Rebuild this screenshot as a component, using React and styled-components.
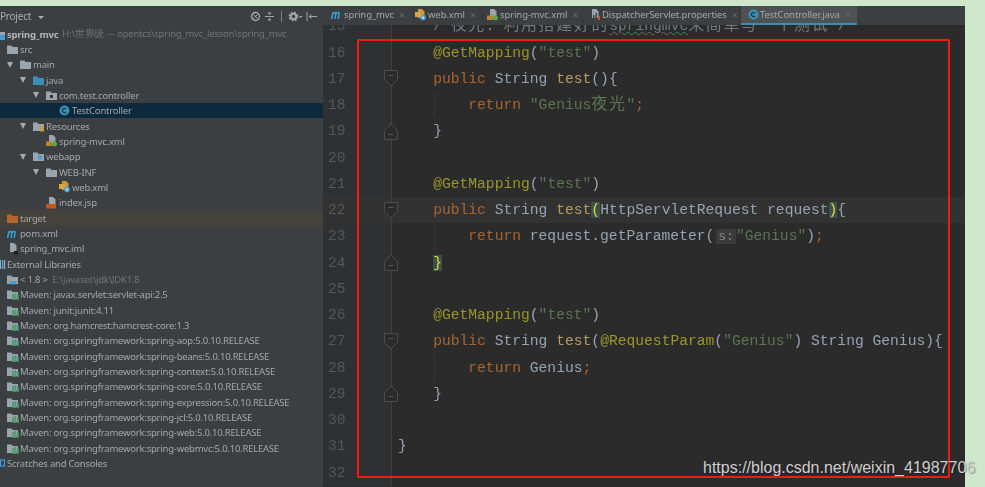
import styled, { createGlobalStyle } from "styled-components";

const GlobalStyle = createGlobalStyle`
    html, body {
        margin: 0;
        height: 100%;
        overflow: hidden;
        background: #cfe8cb;
    }
`

const Page = styled.div`
    position: relative;
    width: 985px;
    height: 487px;
    padding-top: 6px;
    box-sizing: border-box;
    overflow: hidden;
`

const Window = styled.div`
    display: flex;
    width: 965px;
    height: 481px;
    overflow: hidden;
    background: #3c3f41;
    filter: blur(0.45px);
`

const Sidebar = styled.div`
    width: 323px;
    flex: none;
    overflow: hidden;
    font-family: "Noto Sans", sans-serif;
    font-size: 9.5px;
    letter-spacing: -0.22px;
    color: #a4a8aa;
`

const PanelHeader = styled.div`
    display: flex;
    align-items: center;
    height: 20px;
    padding-right: 5px;
    margin-bottom: 0.5px;
    font-size: 10px;
`

const PanelTitle = styled.span`
    flex: 1;
    color: #a9adaf;
`

const Caret = styled.span`
    display: inline-block;
    margin-left: 7px;
    vertical-align: 1px;
    border-left: 3px solid transparent;
    border-right: 3px solid transparent;
    border-top: 3px solid #a9adaf;
`

const HeaderTools = styled.div`
    display: flex;
    align-items: center;
    gap: 3px;
`

const ToolSep = styled.div`
    width: 1px;
    height: 11px;
    background: #7d8082;
    margin: 0 3px;
`

const Tree = styled.div`
    margin-left: -19px;
`

const TreeRow = styled.div`
    display: flex;
    align-items: center;
    height: 15.33px;
    padding-left: ${p => p.$depth * 13}px;
    white-space: nowrap;
    background: ${p => p.$bg || "transparent"};
`

const ArrowSlot = styled.span`
    display: flex;
    align-items: center;
    width: 13px;
    flex: none;
`

const ArrowDown = styled.span`
    border-left: 3px solid transparent;
    border-right: 3px solid transparent;
    border-top: 6px solid #a7abad;
`

const ArrowRight = styled.span`
    border-top: 3px solid transparent;
    border-bottom: 3px solid transparent;
    border-left: 5px solid #83878a;
`

const IconSlot = styled.span`
    display: flex;
    align-items: center;
    width: 13px;
    flex: none;
`

const RootName = styled.b`
    color: #b4b7b9;
    margin-right: 4px;
`

const DimText = styled.span`
    color: #707476;
`

const Editor = styled.div`
    flex: 1;
    min-width: 0;
    display: flex;
    flex-direction: column;
    background: #2b2b2b;
`

const TabBar = styled.div`
    display: flex;
    height: 19px;
    flex: none;
    padding-left: 6px;
    background: #3c3f41;
    font-family: "Noto Sans", sans-serif;
    font-size: 9.5px;
    letter-spacing: -0.1px;
`

const Tab = styled.div`
    display: flex;
    align-items: center;
    gap: 1px;
    width: ${p => p.$w}px;
    flex: none;
    box-sizing: border-box;
    padding-left: ${p => p.$pad}px;
    color: #a4a8aa;
    background: ${p => p.$active ? "#4e5254" : "transparent"};
    border-bottom: 2px solid ${p => p.$active ? "#3b8fb3" : "transparent"};
    box-shadow: ${p => p.$active ? "none" : "inset -1px 0 0 #343638"};

    svg {
        flex: none;
    }
`

const TabName = styled.span`
    white-space: nowrap;
`

const TabClose = styled.span`
    color: #696c6e;
    font-size: 11px;
    margin-left: 4px;
`

const CodeViewport = styled.div`
    flex: 1;
    min-height: 0;
    overflow: hidden;
`

const CodeArea = styled.div`
    margin-top: -11.7px;
    font-family: "Liberation Mono", "Noto Sans CJK SC", monospace;
    font-size: 14.65px;
    color: #95a3b3;
`

const CodeLine = styled.div`
    display: flex;
    height: 26.25px;
    line-height: 26.25px;
    background: ${p => p.$current ? "#323232" : "transparent"};
`

const LineNo = styled.div`
    width: 61px;
    flex: none;
    box-sizing: border-box;
    padding-left: 5px;
    color: #55585a;
    background: ${p => p.$current ? "#323232" : "#2e3031"};
`

const FoldSlot = styled.div`
    position: relative;
    display: flex;
    align-items: center;
    justify-content: center;
    width: 14px;
    flex: none;
    background: linear-gradient(90deg, ${p => p.$current ? "#323232" : "#2e3031"} 50%, transparent 50%);

    &::before {
        content: "";
        position: absolute;
        left: 7px;
        top: 0;
        bottom: 0;
        width: 1px;
        background: #3f4143;
    }

    svg {
        position: relative;
        flex: none;
    }
`

const Code = styled.div`
    flex: 1;
    white-space: pre;
    background: ${p => p.$guide ? "linear-gradient(90deg, transparent 36px, #353739 36px, #353739 37px, transparent 37px)" : "none"};
`

const Keyword = styled.span`
    color: #a8652f;
`

const Annotation = styled.span`
    color: #9a962a;
`

const Str = styled.span`
    color: #5d7550;
`

const Method = styled.span`
    color: #b89c63;
`

const Comment = styled.span`
    color: #76787a;
`

const Wavy = styled.span`
    text-decoration: underline wavy #5f7a50 1px;
`

const Han = styled.span`
    font-size: 16px;
    letter-spacing: 1.6px;
`

const Brace = styled.span`
    color: #e5d83a;
    background: #3a514c;
`

const Hint = styled.span`
    margin-left: 2px;
    padding: 0 2px;
    background: #3b3b3b;
    color: #85888a;
    font-size: 13px;
`

const RedBox = styled.div`
    position: absolute;
    left: 357px;
    top: 39px;
    width: 593px;
    height: 439px;
    box-sizing: border-box;
    border: 2.5px solid #f01c12;
    border-radius: 1px;
    pointer-events: none;
`

const Watermark = styled.div`
    position: absolute;
    left: 703px;
    top: 458px;
    font-family: "Liberation Sans", Arial, sans-serif;
    font-size: 16px;
    line-height: 20px;
    white-space: nowrap;
    color: #cfcfcf;
    text-shadow: 1px 1px 1px rgba(0, 0, 0, 0.35);
`

const Folder = ({ color = "#9aa5ad", children }) => (
    <svg width="12" height="11" viewBox="0 0 12 11">
        <path d="M0 1.5h4.5l1 1.5H11v7H0z" fill={color} />
        {children}
    </svg>
)

const SheetFile = ({ color = "#9aa5ad", children }) => (
    <svg width="12" height="12" viewBox="0 0 12 12">
        <path d="M3 0h4l2.500 2.500V9H3z" fill={color} />
        {children}
    </svg>
)

const icons = {
    root: <Folder><rect x="6" y="6" width="5" height="5" fill="#3f9fd6" /></Folder>,
    folder: <Folder />,
    source: <Folder color="#3e8fb8" />,
    pkg: <Folder><rect x="4" y="5" width="3" height="3" fill="#2f3234" /></Folder>,
    resources: <Folder><rect x="7" y="5" width="4" height="1.500" fill="#c49a3a" /><rect x="7" y="7" width="4" height="1.500" fill="#c49a3a" /><rect x="7" y="9" width="4" height="1.500" fill="#c49a3a" /></Folder>,
    web: <Folder><rect x="5" y="4.500" width="4" height="4" fill="#3f9fd6" /></Folder>,
    target: <Folder color="#b5652c" />,
    klass: (
        <svg width="11" height="11" viewBox="0 0 11 11">
            <circle cx="5.500" cy="5.500" r="5" fill="#3d8fb5" />
            <path d="M7.200 4a2.200 2.200 0 1 0 0 3" fill="none" stroke="#173d52" strokeWidth="1.300" />
        </svg>
    ),
    xml: (
        <SheetFile>
            <rect x="0" y="6.500" width="6" height="4.500" fill="#b5862d" />
            <circle cx="8.500" cy="9" r="2.500" fill="#5aa63c" />
        </SheetFile>
    ),
    webxml: (
        <SheetFile color="#c89a3e">
            <rect x="0" y="3" width="6" height="5" fill="#d8a53e" />
            <circle cx="8" cy="8.500" r="2.800" fill="#4da3d8" />
            <circle cx="8" cy="8.500" r="1" fill="#e4eef4" />
        </SheetFile>
    ),
    jsp: (
        <SheetFile>
            <rect x="0" y="7" width="10" height="4.500" fill="#c2571f" />
        </SheetFile>
    ),
    props: (
        <SheetFile>
            <rect x="4" y="6" width="1.500" height="5" fill="#3f4143" />
            <rect x="6.500" y="4" width="1.500" height="7" fill="#3f4143" />
            <rect x="9" y="7" width="2" height="4" fill="#c2571f" />
        </SheetFile>
    ),
    iml: (
        <SheetFile>
            <rect x="7" y="8" width="4" height="3.500" fill="#1d1e1f" />
        </SheetFile>
    ),
    pom: (
        <svg width="12" height="11" viewBox="0 0 12 11">
            <path d="M0.500 10L2 3.500M2 4.500C3 3 5 3 4.800 4.500L4 10M5 4.500C6 3 8.300 3 8 4.500L7.200 10" fill="none" stroke="#3aa3d6" strokeWidth="1.500" />
        </svg>
    ),
    libs: (
        <svg width="12" height="11" viewBox="0 0 12 11">
            <rect x="6" y="1" width="1.200" height="9" fill="#9aa5ad" />
            <rect x="8" y="1" width="1.500" height="9" fill="#3f9fd6" />
            <rect x="10" y="1" width="1.200" height="9" fill="#9aa5ad" />
        </svg>
    ),
    scratch: (
        <svg width="12" height="11" viewBox="0 0 12 11">
            <rect x="6.500" y="2" width="4" height="6" fill="none" stroke="#3f9fd6" strokeWidth="1.200" />
        </svg>
    ),
    jdk: <Folder><path d="M2 7h8L8 10.500H4z" fill="#3f9fd6" /></Folder>,
    lib: <Folder><rect x="5" y="5" width="1.800" height="6" fill="#4f9a68" /><rect x="7.500" y="4" width="1.800" height="7" fill="#4f9a68" /><rect x="10" y="5.500" width="1.800" height="5.500" fill="#4f9a68" /></Folder>,
}

const mavenLibs = [
    "javax.servlet:servlet-api:2.5",
    "junit:junit:4.11",
    "org.hamcrest:hamcrest-core:1.3",
    "org.springframework:spring-aop:5.0.10.RELEASE",
    "org.springframework:spring-beans:5.0.10.RELEASE",
    "org.springframework:spring-context:5.0.10.RELEASE",
    "org.springframework:spring-core:5.0.10.RELEASE",
    "org.springframework:spring-expression:5.0.10.RELEASE",
    "org.springframework:spring-jcl:5.0.10.RELEASE",
    "org.springframework:spring-web:5.0.10.RELEASE",
    "org.springframework:spring-webmvc:5.0.10.RELEASE",
]

const treeRows = [
    { depth: 0, icon: "root", root: true, label: "spring_mvc", dim: "H:\\世界级 --- opentcs\\spring_mvc_lesson\\spring_mvc" },
    { depth: 1, arrow: "down", icon: "folder", label: "src" },
    { depth: 2, arrow: "down", icon: "folder", label: "main" },
    { depth: 3, arrow: "down", icon: "source", label: "java" },
    { depth: 4, arrow: "down", icon: "pkg", label: "com.test.controller" },
    { depth: 5, icon: "klass", label: "TestController", bg: "#0d293e" },
    { depth: 3, arrow: "down", icon: "resources", label: "Resources" },
    { depth: 4, icon: "xml", label: "spring-mvc.xml" },
    { depth: 3, arrow: "down", icon: "web", label: "webapp" },
    { depth: 4, arrow: "down", icon: "folder", label: "WEB-INF" },
    { depth: 5, icon: "webxml", label: "web.xml" },
    { depth: 4, icon: "jsp", label: "index.jsp" },
    { depth: 1, arrow: "right", icon: "target", label: "target", bg: "#45423c" },
    { depth: 1, icon: "pom", label: "pom.xml" },
    { depth: 1, icon: "iml", label: "spring_mvc.iml" },
    { depth: 0, icon: "libs", label: "External Libraries" },
    { depth: 1, arrow: "right", icon: "jdk", label: "< 1.8 >", dim: "E:\\javaset\\jdk\\JDK1.8" },
    ...mavenLibs.map(name => ({ depth: 1, arrow: "right", icon: "lib", label: `Maven: ${name}` })),
    { depth: 0, icon: "scratch", label: "Scratches and Consoles" },
]

const tabs = [
    { icon: "pom", name: "spring_mvc", w: 85, pad: 2 },
    { icon: "webxml", name: "web.xml", w: 69, pad: 1 },
    { icon: "xml", name: "spring-mvc.xml", w: 100, pad: 4 },
    { icon: "props", name: "DispatcherServlet.properties", w: 158, pad: 6 },
    { icon: "klass", name: "TestController.java", w: 116, pad: 7, active: true },
]

const FoldOpen = () => (
    <svg width="14" height="17" viewBox="0 0 14 17">
        <path d="M0.500 0.500h13v9l-6.500 6.500l-6.500-6.500z" fill="#2b2b2b" stroke="#4b4d4e" />
        <path d="M4.500 5.500h5" stroke="#555759" />
    </svg>
)

const FoldClose = () => (
    <svg width="14" height="17" viewBox="0 0 14 17">
        <path d="M0.500 16.500h13v-9l-6.500-6.500l-6.500 6.500z" fill="#2b2b2b" stroke="#4b4d4e" />
        <path d="M4.500 11.500h5" stroke="#555759" />
    </svg>
)

const getMapping = (
    <>    <Annotation>@GetMapping</Annotation>(<Str>"test"</Str>)</>
)

const codeLines = [
    { no: 15, code: <><Comment>    /*<Han>夜光：利用搭建好的</Han><Wavy>springmvc</Wavy><Han>来简单写一个测试</Han>*/</Comment></> },
    { no: 16, code: getMapping },
    { no: 17, fold: "open", code: <>    <Keyword>public</Keyword> String <Method>test</Method>(){"{"}</> },
    { no: 18, guide: true, code: <>        <Keyword>return</Keyword> <Str>"Genius<Han>夜光</Han>"</Str><Keyword>;</Keyword></> },
    { no: 19, fold: "close", code: <>    {"}"}</> },
    { no: 20 },
    { no: 21, code: getMapping },
    { no: 22, fold: "open", current: true, code: <>    <Keyword>public</Keyword> String <Method>test</Method><Brace>(</Brace>HttpServletRequest request<Brace>)</Brace>{"{"}</> },
    { no: 23, guide: true, code: <>        <Keyword>return</Keyword> request.getParameter(<Hint>s:</Hint><Str>"Genius"</Str>)<Keyword>;</Keyword></> },
    { no: 24, fold: "close", code: <>    <Brace>{"}"}</Brace></> },
    { no: 25 },
    { no: 26, code: getMapping },
    { no: 27, fold: "open", code: <>    <Keyword>public</Keyword> String <Method>test</Method>(<Annotation>@RequestParam</Annotation>(<Str>"Genius"</Str>) String Genius){"{"}</> },
    { no: 28, guide: true, code: <>        <Keyword>return</Keyword> Genius<Keyword>;</Keyword></> },
    { no: 29, fold: "close", code: <>    {"}"}</> },
    { no: 30 },
    { no: 31, code: <>{"}"}</> },
    { no: 32 },
]

const HeaderIcons = () => (
    <HeaderTools>
        <svg width="11" height="11" viewBox="0 0 11 11">
            <circle cx="5.500" cy="5.500" r="4" fill="none" stroke="#a4a8aa" strokeWidth="1.400" />
            <path d="M3.500 3.500l4 4M7.500 3.500l-4 4" stroke="#a4a8aa" />
        </svg>
        <svg width="11" height="11" viewBox="0 0 11 11">
            <path d="M1 5.500h9" stroke="#a4a8aa" />
            <path d="M5.500 4L3.500 1.500h4zM5.500 7l-2 2.500h4z" fill="#a4a8aa" />
        </svg>
        <ToolSep />
        <svg width="15" height="11" viewBox="0 0 15 11">
            <circle cx="5.500" cy="5.500" r="2.800" fill="none" stroke="#a4a8aa" strokeWidth="2" />
            <circle cx="5.500" cy="5.500" r="4.300" fill="none" stroke="#a4a8aa" strokeWidth="1.400" strokeDasharray="1.700 1.700" />
            <path d="M11 5h3.500l-1.750 2z" fill="#a4a8aa" />
        </svg>
        <svg width="12" height="11" viewBox="0 0 12 11">
            <path d="M1 1v9M3 5.500h8M3 5.500l2.500-2M3 5.500l2.500 2" fill="none" stroke="#a4a8aa" />
        </svg>
    </HeaderTools>
)

const App = () => {
    return (
        <Page>
            <GlobalStyle />
            <Window>
                <Sidebar>
                    <PanelHeader>
                        <PanelTitle>Project<Caret /></PanelTitle>
                        <HeaderIcons />
                    </PanelHeader>
                    <Tree>
                        {treeRows.map(row => (
                            <TreeRow key={row.label} $depth={row.depth} $bg={row.bg}>
                                <ArrowSlot>
                                    {row.arrow === "down" && <ArrowDown />}
                                    {row.arrow === "right" && <ArrowRight />}
                                </ArrowSlot>
                                <IconSlot>{icons[row.icon]}</IconSlot>
                                {row.root ? <RootName>{row.label}</RootName> : <span>{row.label}</span>}
                                {row.dim && <DimText>{row.root ? "" : "\u00a0\u00a0"}{row.dim}</DimText>}
                            </TreeRow>
                        ))}
                    </Tree>
                </Sidebar>
                <Editor>
                    <TabBar>
                        {tabs.map(tab => (
                            <Tab key={tab.name} $w={tab.w} $pad={tab.pad} $active={tab.active}>
                                {icons[tab.icon]}
                                <TabName>{tab.name}</TabName>
                                <TabClose>×</TabClose>
                            </Tab>
                        ))}
                    </TabBar>
                    <CodeViewport>
                        <CodeArea>
                            {codeLines.map(line => (
                                <CodeLine key={line.no} $current={line.current}>
                                    <LineNo $current={line.current}>{line.no}</LineNo>
                                    <FoldSlot $current={line.current}>
                                        {line.fold === "open" && <FoldOpen />}
                                        {line.fold === "close" && <FoldClose />}
                                    </FoldSlot>
                                    <Code $guide={line.guide}>{line.code}</Code>
                                </CodeLine>
                            ))}
                        </CodeArea>
                    </CodeViewport>
                </Editor>
            </Window>
            <RedBox />
            <Watermark>https://blog.csdn.net/weixin_41987706</Watermark>
        </Page>
    )
}

export default App
